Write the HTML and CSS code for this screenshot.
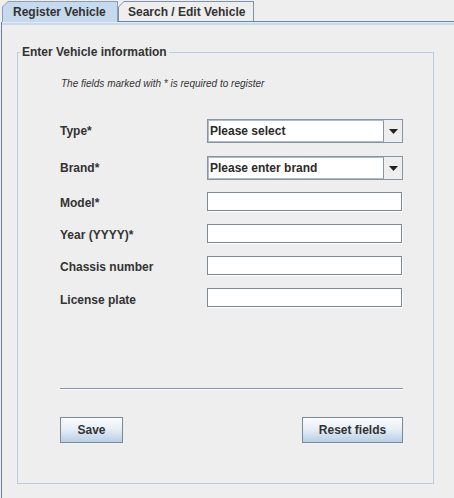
FILE: index.html
```html
<!DOCTYPE html>
<html>
<head>
<meta charset="utf-8">
<link rel="stylesheet" href="styles.css">
</head>
<body>
<div class="app">
  <div class="tabs">
    <div class="tab sel"><span class="tab-in">Register Vehicle</span></div>
    <div class="tab"><span class="tab-in">Search / Edit Vehicle</span></div>
    <div class="fill"></div>
  </div>
  <div class="pane">
    <fieldset class="group">
      <legend class="title">Enter Vehicle information</legend>
      <div class="content">
        <p class="note">The fields marked with * is required to register</p>
        <div class="rows">
          <div class="row combo-row first">
            <span class="label">Type*</span>
            <div class="combo"><span class="combo-text">Please select</span><span class="combo-btn"><svg width="9" height="5" viewBox="0 0 9 5"><polygon points="0,0 9,0 4.5,5" fill="#222"/></svg></span></div>
          </div>
          <div class="row combo-row">
            <span class="label">Brand*</span>
            <div class="combo"><span class="combo-text">Please enter brand</span><span class="combo-btn"><svg width="9" height="5" viewBox="0 0 9 5"><polygon points="0,0 9,0 4.5,5" fill="#222"/></svg></span></div>
          </div>
          <div class="row field-row">
            <span class="label">Model*</span>
            <div class="field"></div>
          </div>
          <div class="row field-row">
            <span class="label">Year (YYYY)*</span>
            <div class="field"></div>
          </div>
          <div class="row field-row">
            <span class="label">Chassis number</span>
            <div class="field"></div>
          </div>
          <div class="row field-row last">
            <span class="label">License plate</span>
            <div class="field"></div>
          </div>
        </div>
        <div class="sep"></div>
        <div class="buttons">
          <button class="btn save">Save</button>
          <button class="btn reset">Reset fields</button>
        </div>
      </div>
    </fieldset>
  </div>
</div>
</body>
</html>
```

FILE: styles.css
```css
html, body {
  margin: 0;
  padding: 0;
}
body {
  background: #eeeeee;
  width: 454px;
  height: 498px;
  overflow: hidden;
  font-family: "Liberation Sans", Arial, sans-serif;
  color: #333333;
}
.app {
  display: flex;
  flex-direction: column;
  height: 498px;
}
.tabs {
  display: flex;
  align-items: flex-end;
  height: 22px;
  padding-left: 2px;
  box-sizing: border-box;
}
.tab {
  height: 19px;
  background: #7f92aa;
  padding: 1px 1px 0 1px;
  clip-path: polygon(0 6px, 6px 0, 100% 0, 100% 100%, 0 100%);
  border-bottom: 1px solid #6e819e;
  display: flex;
}
.tab.sel {
  height: 20px;
  border-bottom: none;
  background: #8a9db3;
}
.tab-in {
  display: flex;
  align-items: center;
  background: #eeeeee;
  clip-path: polygon(0 5px, 5px 0, 100% 0, 100% 100%, 0 100%);
  font-weight: bold;
  font-size: 12px;
  line-height: 14px;
  color: #333;
}
.tab.sel .tab-in {
  background: #c6d9ed;
  width: 114px;
  padding-left: 10px;
  box-sizing: border-box;
}
.tab:not(.sel) .tab-in {
  width: 134px;
  padding-left: 9px;
  box-sizing: border-box;
}
.fill {
  flex: 1;
  border-bottom: 1px solid #6e819e;
}
.pane {
  flex: 1;
  margin-left: 1px;
  border-left: 1px solid #6e819e;
  background: linear-gradient(#e3ebf4 0 1px, #c6d9ed 1px 3px, #eeeeee 3px) no-repeat;
  padding-top: 23px;
}
.group {
  margin: 0 0 0 15px;
  padding: 0;
  width: 417px;
  box-sizing: border-box;
  border: 1px solid #b8cde2;
  min-width: 0;
}
.title {
  margin-left: 2px;
  padding: 0 2px;
  font-weight: bold;
  font-size: 12px;
  line-height: 14px;
  color: #333;
}
.content {
  padding: 0 30px 40px 42px;
}
.note {
  margin: 19px 0 0 1px;
  font-style: italic;
  font-size: 10px;
  line-height: 12px;
  color: #333;
}
.rows {
  margin-top: 29px;
  display: flex;
  flex-direction: column;
  gap: 12px;
}
.row {
  display: flex;
  align-items: center;
}
.combo-row {
  height: 24px;
}
.combo-row.first {
  margin-bottom: 1px;
}
.field-row {
  height: 20px;
}
.field-row .label {
  padding-top: 1px;
}
.field-row.last .label {
  padding-top: 3px;
}
.label {
  width: 147px;
  font-weight: bold;
  font-size: 12px;
  line-height: 14px;
  color: #333;
}
.combo {
  width: 196px;
  height: 24px;
  box-sizing: border-box;
  display: flex;
  border: 1px solid #8995a2;
  background: #ffffff;
}
.combo-text {
  flex: 1;
  display: flex;
  align-items: center;
  padding-left: 1px;
  border: 1px solid #a9bdd2;
  border-right: 1px solid #8995a2;
  font-weight: bold;
  font-size: 12px;
  color: #2b2b2b;
}
.combo-btn {
  width: 18px;
  background: #eeeeee;
  display: flex;
  align-items: center;
  justify-content: center;
}
.combo-btn svg {
  display: block;
  margin-left: 1px;
}
.field {
  width: 195px;
  height: 19px;
  box-sizing: border-box;
  align-self: flex-start;
  background: #ffffff;
  border: 1px solid #7f8991;
  box-shadow: 1px 1px 0 #ffffff;
}
.sep {
  margin-top: 80px;
  height: 0;
  border-top: 1px solid #8397b0;
  border-bottom: 1px solid #ffffff;
}
.buttons {
  margin-top: 27px;
  display: flex;
  justify-content: space-between;
}
.btn {
  height: 26px;
  box-sizing: border-box;
  border: 1px solid #7a8a99;
  border-radius: 0;
  background: linear-gradient(#fbfcfe 0%, #e6eef7 45%, #b9cfe5 100%);
  font-family: "Liberation Sans", Arial, sans-serif;
  font-weight: bold;
  font-size: 12px;
  color: #333;
  padding: 0;
}
.btn.save {
  width: 63px;
}
.btn.reset {
  width: 101px;
}
```
